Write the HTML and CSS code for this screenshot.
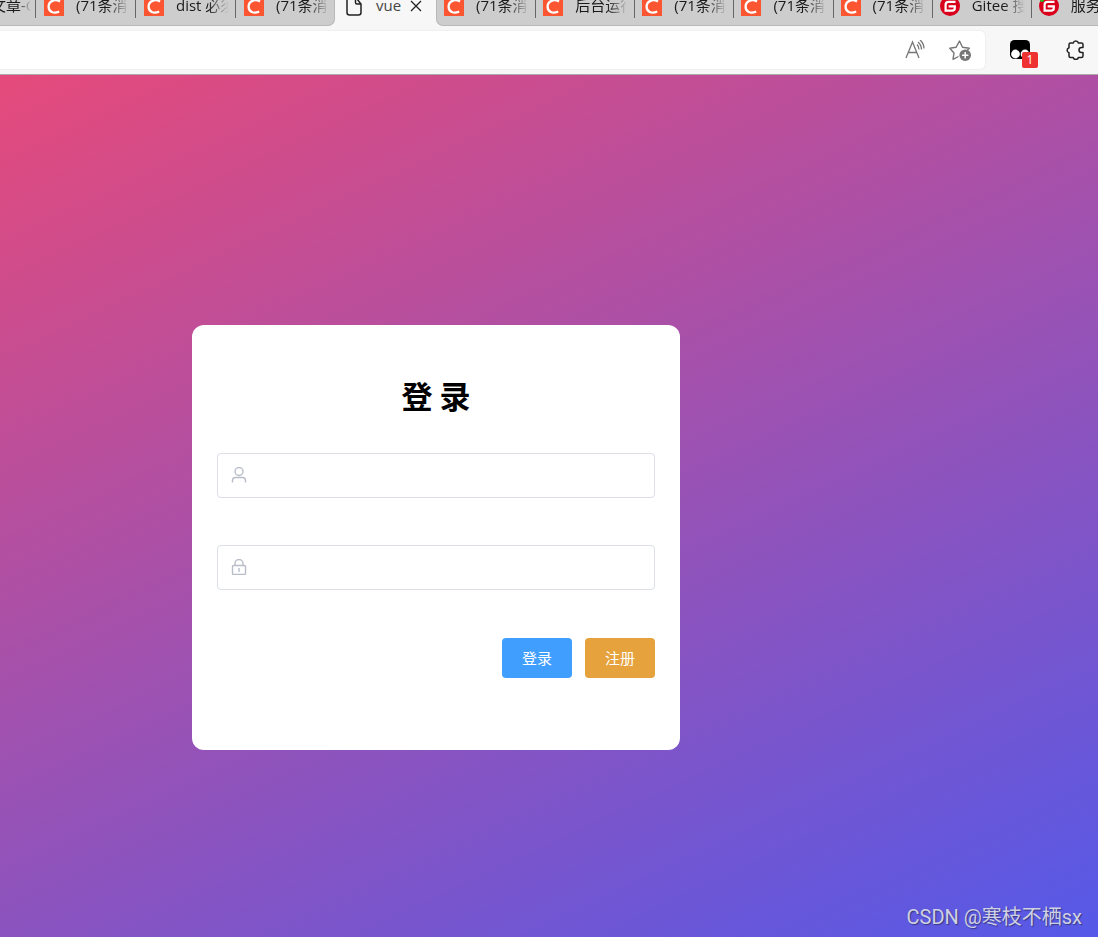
FILE: index.html
```
<!DOCTYPE html>
<html lang="zh-CN">
<head>
<meta charset="utf-8">
<title>vue</title>
<link rel="stylesheet" href="styles.css">
</head>
<body>
<svg class="defs" aria-hidden="true">
  <symbol id="csdn" viewBox="0 4 20 16">
    <path fill="#fc5531" d="M0 0h20v20H0z"/>
    <path fill="none" stroke="#fff" stroke-width="2.3" d="M16 5.6C11 2.500 4.800 5 4.600 10.500c-.2 5.500 5.200 7.500 10.600 5"/>
  </symbol>
  <symbol id="gitee" viewBox="0 4 20 16">
    <circle cx="10" cy="10" r="10" fill="#d9001b"/>
    <path fill="none" stroke="#fff" stroke-width="2.200" d="M15.500 5.800H8.500Q5.600 5.800 5.600 8.700v6h6.500q2.700 0 2.700-2.700v-1.600H8.600"/>
  </symbol>
</svg>

<header class="browser">
  <nav class="tabs" aria-label="标签页">
    <div class="group group-left">
      <a class="tab tab-cut" href="#"><span class="tab-text">文章-C</span></a>
      <a class="tab" href="#"><svg class="favicon"><use href="#csdn"/></svg><span class="tab-text">(71条消息</span></a>
      <a class="tab" href="#"><svg class="favicon"><use href="#csdn"/></svg><span class="tab-text">dist 必须</span></a>
      <a class="tab" href="#"><svg class="favicon"><use href="#csdn"/></svg><span class="tab-text">(71条消息</span></a>
    </div>
    <div class="active-tab">
      <svg class="page-icon" viewBox="0 0 16 16"><path d="M1 0v12.500Q1 15 3.500 15h9q2.500 0 2.500-2.500V4L11-1M9.500-1v3.500Q9.500 4 11 4h4"/></svg>
      <a class="active-text" href="#">vue</a>
      <button class="close" type="button" aria-label="关闭"><svg viewBox="0 0 12 12"><path d="M1 1l10 10M11 1 1 11"/></svg></button>
    </div>
    <div class="group group-right">
      <a class="tab" href="#"><svg class="favicon"><use href="#csdn"/></svg><span class="tab-text">(71条消息</span></a>
      <a class="tab" href="#"><svg class="favicon"><use href="#csdn"/></svg><span class="tab-text">后台运行</span></a>
      <a class="tab" href="#"><svg class="favicon"><use href="#csdn"/></svg><span class="tab-text">(71条消息</span></a>
      <a class="tab" href="#"><svg class="favicon"><use href="#csdn"/></svg><span class="tab-text">(71条消息</span></a>
      <a class="tab" href="#"><svg class="favicon"><use href="#csdn"/></svg><span class="tab-text">(71条消息</span></a>
      <a class="tab" href="#"><svg class="favicon"><use href="#gitee"/></svg><span class="tab-text">Gitee 搜</span></a>
      <a class="tab" href="#"><svg class="favicon"><use href="#gitee"/><circle cx="3" cy="0" r="2" fill="#20c020"/></svg><span class="tab-text">服务</span></a>
    </div>
  </nav>
  <div class="toolbar">
    <div class="address">
      <button class="tool" type="button" aria-label="朗读此页"><svg width="20" height="20" viewBox="0 0 20 20" fill="none" stroke="#767676" stroke-width="1.300"><path d="M1 18 7.500 2 14 18M3.500 12.500h8M12 4.500q2 2 2 5M13 2q3.500 3 3.500 7.500M15 0q4 3.500 4 8.500"/></svg></button>
      <button class="tool" type="button" aria-label="收藏"><svg width="22" height="22" viewBox="0 0 22 22"><path fill="none" stroke="#767676" stroke-width="1.400" stroke-linejoin="round" d="M9.500 17.500 4 20.300l1-6.300L.8 9.300l6.200-1L10.500 2l3 6.300 6.800 1-2 2"/><circle cx="16.200" cy="16.200" r="5.800" fill="#767676"/><path stroke="#fff" stroke-width="1.500" d="M13 16.200h6.400M16.200 13v6.400"/></svg></button>
    </div>
    <div class="extensions">
      <button class="tool extension" type="button" aria-label="扩展"><svg width="20" height="20" viewBox="0 0 20 20"><rect width="20" height="19" rx="4.500"/><circle cx="5.500" cy="14" r="4.400" fill="#fff"/><circle cx="15" cy="14" r="4.400" fill="#fff"/></svg><span class="badge">1</span></button>
      <button class="tool" type="button" aria-label="扩展菜单"><svg width="20" height="20" viewBox="0 0 20 20"><path fill="none" stroke="#222" stroke-width="1.500" stroke-linejoin="round" d="M3 4.500q0-1.500 1.500-1.500h2.700a2.700 2.700 0 0 1 5.200 0h3q1.600 0 1.600 1.500v3h-1.500a2.400 2.400 0 0 0 0 5H17V16q0 1.500-1.600 1.500h-3a2.700 2.700 0 0 1-5.200 0H4.500Q3 17.500 3 16v-3.300a2.600 2.600 0 0 1 0-5z"/></svg></button>
    </div>
  </div>
</header>

<main class="page">
  <form class="card">
    <h1 class="title">登 录</h1>
    <label class="field">
      <svg class="field-icon" viewBox="0 0 16 16"><circle cx="8" cy="4.500" r="4"/><path d="M1.500 15.500v-2Q1.500 10.500 4.500 10.500h7q3 0 3 3v2"/></svg>
      <input class="input" type="text" aria-label="用户名">
    </label>
    <label class="field">
      <svg class="field-icon" viewBox="0 0 16 16"><rect x="1.500" y="6.500" width="13" height="9" rx="1"/><path d="M4 6.500V4.500a4 4 0 0 1 8 0v2M8 9v4"/></svg>
      <input class="input" type="password" aria-label="密码">
    </label>
    <div class="actions">
      <button class="button primary" type="button">登录</button>
      <button class="button warning" type="button">注册</button>
    </div>
  </form>
  <p class="watermark">CSDN @寒枝不栖sx</p>
</main>
</body>
</html>
```

FILE: styles.css
```
* { box-sizing: border-box; }
body {
  margin: 0;
  min-height: 100vh;
  display: flex;
  flex-direction: column;
  font-family: "Open Sans", "Noto Sans CJK SC", sans-serif;
}
button { font: inherit; border: 0; padding: 0; background: none; }
a { color: inherit; text-decoration: none; }
.defs { position: absolute; width: 0; height: 0; }

.browser { background: #f7f7f7; border-bottom: 1px solid #aaa; }
.tabs { display: flex; height: 26px; overflow: hidden; font-size: 15px; line-height: 10px; color: #1a1a1a; }
.group { display: flex; background: #cdcdcd; border-bottom: 1px solid #b8b8b8; overflow: hidden; }
.group-left { flex: 0 0 335px; border-right: 1px solid #b8b8b8; border-bottom-right-radius: 7px; }
.group-right { flex: 1; min-width: 0; border-left: 1px solid #b8b8b8; border-bottom-left-radius: 7px; }
.tab { display: flex; flex: 0 0 100px; min-width: 0; padding: 0 7px 0 8px; gap: 12px; position: relative; }
.group-right .tab { flex-basis: 15%; padding-left: 7px; }
.tab-cut { flex-basis: 36px; padding: 0 5px 0 0; }
.tab-cut .tab-text { text-indent: -9px; }
.tab:not(:last-child)::after { content: ""; position: absolute; right: 0; top: 0; width: 1px; height: 18px; background: #666; }
.favicon { flex: none; width: 20px; height: 16px; }
.tab-text {
  flex: 1;
  min-width: 0;
  height: 25px;
  overflow: hidden;
  white-space: nowrap;
  -webkit-mask-image: linear-gradient(to right, #000 60%, transparent);
  mask-image: linear-gradient(to right, #000 60%, transparent);
}
.active-tab { flex: 0 0 101px; display: flex; align-items: flex-start; padding-left: 11px; }
.page-icon { width: 16px; height: 16px; fill: none; stroke: #222; stroke-width: 1.5; }
.active-text { width: 24px; margin-left: 14px; height: 25px; color: #444; }
.close { margin-left: 10px; width: 12px; height: 12px; display: flex; }
.close svg { width: 12px; height: 12px; stroke: #222; stroke-width: 1.300; }

.toolbar { display: flex; align-items: center; padding: 4px 0; height: 48px; }
.address {
  flex: 1;
  height: 38px;
  background: #fff;
  border-radius: 0 5px 5px 0;
  box-shadow: 0 0 2px #ddd;
  display: flex;
  justify-content: flex-end;
  align-items: center;
  gap: 24px;
  padding-right: 14px;
}
.tool { display: flex; position: relative; }
.extensions { flex: 0 0 113px; display: flex; justify-content: space-between; padding: 0 12px 0 25px; }
.badge {
  position: absolute;
  left: 12px;
  top: 12px;
  width: 16px;
  height: 16px;
  border-radius: 2px;
  background: #ee3131;
  color: #fff;
  font-size: 12px;
  line-height: 16px;
  text-align: center;
}

.page {
  flex: 1;
  position: relative;
  padding: 250px 24px 187px 192px;
  background: linear-gradient(155deg, #e54a7b, #5559e8);
}
.card { max-width: 488px; padding: 46px 25px 72px; background: #fff; border-radius: 12px; }
.title { margin: 0 0 34px; font-family: "Noto Sans CJK SC", sans-serif; font-size: 31px; line-height: 48px; font-weight: 700; text-align: center; color: #000; }
.field {
  display: flex;
  align-items: center;
  height: 45px;
  margin-bottom: 47px;
  padding: 0 13px 1px;
  gap: 8px;
  border: 1px solid #dcdfe6;
  border-radius: 4px;
}
.field-icon { flex: none; width: 16px; height: 16px; fill: none; stroke: #b8bdc8; stroke-width: 1.4; }
.input { flex: 1; min-width: 0; border: 0; outline: 0; font: inherit; background: none; }
.actions { display: flex; justify-content: flex-end; gap: 13px; padding-top: 1px; }
.button { width: 70px; height: 40px; padding-bottom: 2px; border-radius: 4px; color: #fff; font-size: 15px; }
.primary { background: #409eff; }
.warning { background: #e6a23c; }
.watermark {
  position: absolute;
  right: 16px;
  bottom: 6px;
  margin: 0;
  font-family: Roboto, "Noto Sans CJK SC", sans-serif;
  font-size: 20px;
  line-height: 28px;
  color: #d0d0e4;
  text-shadow: 1px 1px 1px #333a80;
}
```
